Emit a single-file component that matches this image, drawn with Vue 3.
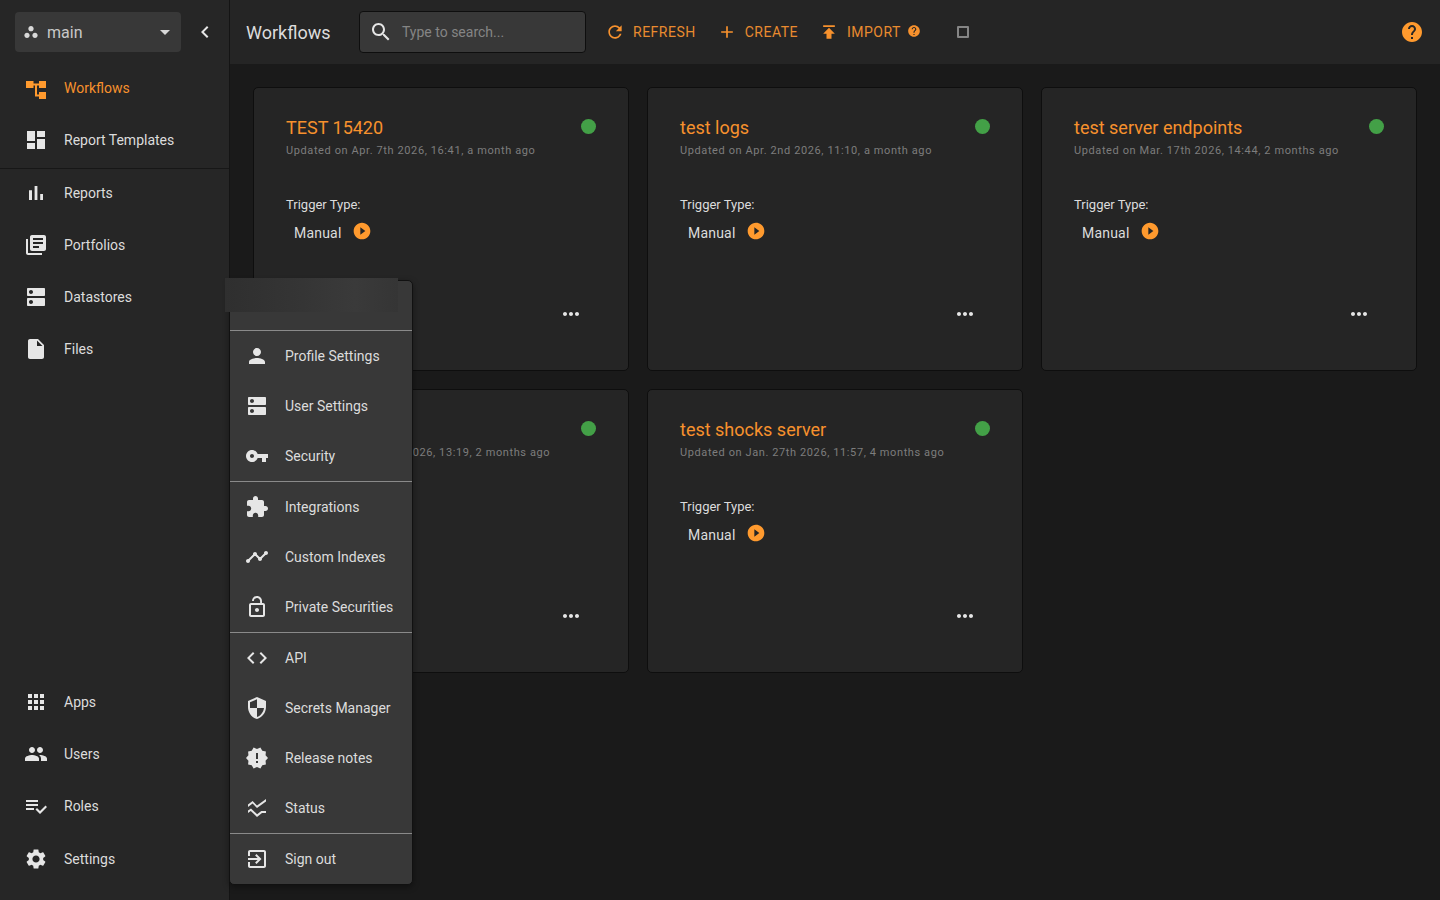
<script setup>
const P = {
  dash: 'M3 13h8V3H3v10zm0 8h8v-6H3v6zm10 0h8V11h-8v10zm0-18v6h8V3h-8z',
  bar: 'M5 9.2h3V19H5zM10.6 5h2.8v14h-2.8zm5.6 8H19v6h-2.8z',
  lib: 'M4 6H2v14c0 1.1.9 2 2 2h14v-2H4V6zm16-4H8c-1.1 0-2 .9-2 2v12c0 1.1.9 2 2 2h12c1.1 0 2-.9 2-2V4c0-1.1-.9-2-2-2zm-1 9H9V9h10v2zm-4 4H9v-2h6v2zm4-8H9V5h10v2z',
  dns: 'M20 13H4c-.55 0-1 .45-1 1v6c0 .55.45 1 1 1h16c.55 0 1-.45 1-1v-6c0-.55-.45-1-1-1zM7 19c-1.1 0-2-.9-2-2s.9-2 2-2 2 .9 2 2-.9 2-2 2zM20 3H4c-.55 0-1 .45-1 1v6c0 .55.45 1 1 1h16c.55 0 1-.45 1-1V4c0-.55-.45-1-1-1zM7 9c-1.1 0-2-.9-2-2s.9-2 2-2 2 .9 2 2-.9 2-2 2z',
  file: 'M6 2c-1.1 0-1.99.9-1.99 2L4 20c0 1.1.89 2 1.99 2H18c1.1 0 2-.9 2-2V8l-6-6H6zm7 7V3.5L18.5 9H13z',
  apps: 'M4 8h4V4H4v4zm6 12h4v-4h-4v4zm-6 0h4v-4H4v4zm0-6h4v-4H4v4zm6 0h4v-4h-4v4zm6-10v4h4V4h-4zm-6 4h4V4h-4v4zm6 6h4v-4h-4v4zm0 6h4v-4h-4v4z',
  people: 'M16 11c1.66 0 2.99-1.34 2.99-3S17.66 5 16 5c-1.66 0-3 1.34-3 3s1.34 3 3 3zm-8 0c1.66 0 2.99-1.34 2.99-3S9.66 5 8 5C6.34 5 5 6.34 5 8s1.34 3 3 3zm0 2c-2.33 0-7 1.17-7 3.5V19h14v-2.5c0-2.33-4.67-3.5-7-3.5zm8 0c-.29 0-.62.02-.97.05 1.16.84 1.97 1.97 1.97 3.45V19h6v-2.5c0-2.33-4.67-3.5-7-3.5z',
  roles: 'M14 10H2v2h12v-2zm0-4H2v2h12V6zM2 16h8v-2H2v2zm19.5-4.5L23 13l-6.99 7-4.51-4.5L13 14l3.01 3 5.49-5.5z',
  gear: 'M19.14 12.94c.04-.3.06-.61.06-.94 0-.32-.02-.64-.07-.94l2.03-1.58c.18-.14.23-.41.12-.61l-1.92-3.32c-.12-.22-.37-.29-.59-.22l-2.39.96c-.5-.38-1.03-.7-1.62-.94l-.36-2.54c-.04-.24-.24-.41-.48-.41h-3.84c-.24 0-.43.17-.47.41l-.36 2.54c-.59.24-1.13.57-1.62.94l-2.39-.96c-.22-.08-.47 0-.59.22L2.74 8.87c-.12.21-.08.47.12.61l2.03 1.58c-.05.3-.09.63-.09.94s.02.64.07.94l-2.03 1.58c-.18.14-.23.41-.12.61l1.92 3.32c.12.22.37.29.59.22l2.39-.96c.5.38 1.03.7 1.62.94l.36 2.54c.05.24.24.41.48.41h3.84c.24 0 .44-.17.47-.41l.36-2.54c.59-.24 1.13-.56 1.62-.94l2.39.96c.22.08.47 0 .59-.22l1.92-3.32c.12-.22.07-.47-.12-.61l-2.01-1.58zM12 15.6c-1.98 0-3.6-1.62-3.6-3.6s1.62-3.6 3.6-3.6 3.6 1.62 3.6 3.6-1.62 3.6-3.6 3.6z',
  person: 'M12 12c2.21 0 4-1.79 4-4s-1.79-4-4-4-4 1.79-4 4 1.79 4 4 4zm0 2c-2.67 0-8 1.34-8 4v2h16v-2c0-2.66-5.33-4-8-4z',
  key: 'M12.65 10C11.83 7.67 9.61 6 7 6c-3.31 0-6 2.69-6 6s2.69 6 6 6c2.61 0 4.83-1.67 5.65-4H17v4h4v-4h2v-4H12.65zM7 14c-1.1 0-2-.9-2-2s.9-2 2-2 2 .9 2 2-.9 2-2 2z',
  ext: 'M20.5 11H19V7c0-1.1-.9-2-2-2h-4V3.5C13 2.12 11.88 1 10.5 1S8 2.12 8 3.5V5H4c-1.1 0-1.99.9-1.99 2v3.8H3.5c1.49 0 2.7 1.21 2.7 2.7s-1.21 2.7-2.7 2.7H2V20c0 1.1.9 2 2 2h3.8v-1.5c0-1.49 1.21-2.7 2.7-2.7 1.49 0 2.7 1.21 2.7 2.7V22H17c1.1 0 2-.9 2-2v-4h1.5c1.38 0 2.5-1.12 2.5-2.5S21.88 11 20.5 11z',
  timeline: 'M23 8c0 1.1-.9 2-2 2-.18 0-.35-.02-.51-.07l-3.56 3.55c.05.16.07.34.07.52 0 1.1-.9 2-2 2s-2-.9-2-2c0-.18.02-.36.07-.52l-2.55-2.55c-.16.05-.34.07-.52.07s-.36-.02-.52-.07l-4.55 4.56c.05.16.07.33.07.51 0 1.1-.9 2-2 2s-2-.9-2-2 .9-2 2-2c.18 0 .35.02.51.07l4.56-4.55C8.02 9.36 8 9.18 8 9c0-1.1.9-2 2-2s2 .9 2 2c0 .18-.02.36-.07.52l2.55 2.55c.16-.05.34-.07.52-.07s.36.02.52.07l3.55-3.56C19.02 8.35 19 8.18 19 8c0-1.1.9-2 2-2s2 .9 2 2z',
  lock: 'M12 17c1.1 0 2-.9 2-2s-.9-2-2-2-2 .9-2 2 .9 2 2 2zm6-9h-1V6c0-2.76-2.24-5-5-5S7 3.24 7 6h1.9c0-1.71 1.39-3.1 3.1-3.1 1.71 0 3.1 1.39 3.1 3.1v2H6c-1.1 0-2 .9-2 2v10c0 1.1.9 2 2 2h12c1.1 0 2-.9 2-2V10c0-1.1-.9-2-2-2zm0 12H6V10h12v10z',
  code: 'M9.4 16.6L4.8 12l4.6-4.6L8 6l-6 6 6 6 1.4-1.4zm5.2 0l4.6-4.6-4.6-4.6L16 6l6 6-6 6-1.4-1.4z',
  shield: 'M12 1L3 5v6c0 5.55 3.84 10.74 9 12 5.16-1.26 9-6.45 9-12V5l-9-4zm0 10.99h7c-.53 4.12-3.28 7.79-7 8.94V12H5V6.3l7-3.11v8.8z',
  release: 'M23 12l-2.44-2.78.34-3.68-3.61-.82-1.89-3.18L12 3 8.6 1.54 6.71 4.72l-3.61.81.34 3.68L1 12l2.44 2.78-.34 3.69 3.61.82 1.89 3.18L12 21l3.4 1.46 1.89-3.18 3.61-.82-.34-3.68L23 12zm-10 5h-2v-2h2v2zm0-4h-2V7h2v6z',
  ssid: 'M21 5.47L12 12 7.62 7.62 3 11V8.52L7.62 5 12 9.4 21 2.99V5.47zM21 15h-4.7l-4.17 3.34L6 12.41l-3 2.13v2.45l2.8-2 6.2 6 5-4h4V15z',
  exit: 'M10.09 15.59L11.5 17l5-5-5-5-1.41 1.41L12.67 11H3v2h9.67l-2.58 2.59zM19 3H5c-1.11 0-2 .9-2 2v4h2V5h14v14H5v-4H3v4c0 1.1.89 2 2 2h14c1.1 0 2-.9 2-2V5c0-1.1-.9-2-2-2z',
  spaces: 'M6 13c-2.2 0-4 1.8-4 4s1.8 4 4 4 4-1.8 4-4-1.8-4-4-4zm6-10C9.8 3 8 4.8 8 7s1.8 4 4 4 4-1.8 4-4-1.8-4-4-4zm6 10c-2.2 0-4 1.8-4 4s1.8 4 4 4 4-1.8 4-4-1.8-4-4-4z',
  drop: 'M7 10l5 5 5-5z',
  chev: 'M15.41 7.41L14 6l-6 6 6 6 1.41-1.41L10.83 12z',
  search: 'M15.5 14h-.79l-.28-.27C15.41 12.59 16 11.11 16 9.5 16 5.91 13.09 3 9.5 3S3 5.91 3 9.5 5.91 16 9.5 16c1.61 0 3.09-.59 4.23-1.57l.27.28v.79l5 4.99L20.49 19l-4.99-5zm-6 0C7.01 14 5 11.99 5 9.5S7.01 5 9.5 5 14 7.01 14 9.5 11.99 14 9.5 14z',
  refresh: 'M17.65 6.35C16.2 4.9 14.21 4 12 4c-4.42 0-7.99 3.58-7.99 8s3.57 8 7.99 8c3.73 0 6.84-2.55 7.73-6h-2.08c-.82 2.33-3.04 4-5.65 4-3.31 0-6-2.69-6-6s2.69-6 6-6c1.66 0 3.14.69 4.22 1.78L13 11h7V4l-2.35 2.35z',
  add: 'M19 13h-6v6h-2v-6H5v-2h6V5h2v6h6v2z',
  publish: 'M5 4v2h14V4H5zm0 10h4v6h6v-6h4l-7-7-7 7z',
  help: 'M12 2C6.48 2 2 6.48 2 12s4.48 10 10 10 10-4.48 10-10S17.52 2 12 2zm1 17h-2v-2h2v2zm2.07-7.75l-.9.92C13.45 12.9 13 13.5 13 15h-2v-.5c0-1.1.45-2.1 1.17-2.83l1.24-1.26c.37-.36.59-.86.59-1.41 0-1.1-.9-2-2-2s-2 .9-2 2H8c0-2.21 1.79-4 4-4s4 1.79 4 4c0 .88-.36 1.68-.93 2.25z',
  play: 'M12 2C6.48 2 2 6.48 2 12s4.48 10 10 10 10-4.48 10-10S17.52 2 12 2zm-2 14.5v-9l6 4.5-6 4.5z',
  more: 'M6 10c-1.1 0-2 .9-2 2s.9 2 2 2 2-.9 2-2-.9-2-2-2zm12 0c-1.1 0-2 .9-2 2s.9 2 2 2 2-.9 2-2-.9-2-2-2zm-6 0c-1.1 0-2 .9-2 2s.9 2 2 2 2-.9 2-2-.9-2-2-2z',
  flow: 'M2 5h7.5v7H2zM15 5h7v7h-7zM15 16h7v7h-7zM9.5 7.5H15v2h-2V18.5h2v2h-4V9.5H9.5z'
}

const navTop = [
  { label: 'Workflows', icon: 'flow', active: true },
  { label: 'Report Templates', icon: 'dash' }
]
const navMid = [
  { label: 'Reports', icon: 'bar' },
  { label: 'Portfolios', icon: 'lib' },
  { label: 'Datastores', icon: 'dns' },
  { label: 'Files', icon: 'file' }
]
const navBottom = [
  { label: 'Apps', icon: 'apps' },
  { label: 'Users', icon: 'people' },
  { label: 'Roles', icon: 'roles' },
  { label: 'Settings', icon: 'gear' }
]
const actions = [
  { label: 'Refresh', icon: 'refresh' },
  { label: 'Create', icon: 'add' },
  { label: 'Import', icon: 'publish', help: true }
]
const cards = [
  { title: 'TEST 15420', updated: 'Updated on Apr. 7th 2026, 16:41, a month ago' },
  { title: 'test logs', updated: 'Updated on Apr. 2nd 2026, 11:10, a month ago' },
  { title: 'test server endpoints', updated: 'Updated on Mar. 17th 2026, 14:44, 2 months ago' },
  { title: 'test', updated: 'Updated on Feb. 24th 2026, 13:19, 2 months ago' },
  { title: 'test shocks server', updated: 'Updated on Jan. 27th 2026, 11:57, 4 months ago' }
]
const menuGroups = [
  [
    { label: 'Profile Settings', icon: 'person' },
    { label: 'User Settings', icon: 'dns' },
    { label: 'Security', icon: 'key' }
  ],
  [
    { label: 'Integrations', icon: 'ext' },
    { label: 'Custom Indexes', icon: 'timeline' },
    { label: 'Private Securities', icon: 'lock' }
  ],
  [
    { label: 'API', icon: 'code' },
    { label: 'Secrets Manager', icon: 'shield' },
    { label: 'Release notes', icon: 'release' },
    { label: 'Status', icon: 'ssid' }
  ],
  [{ label: 'Sign out', icon: 'exit' }]
]
</script>

<template>
  <div class="app">
    <aside class="sidebar">
      <div class="side-top">
        <div class="select">
          <svg class="spaces" viewBox="0 0 24 24"><path :d="P.spaces" /></svg>
          <span class="select-label">main</span>
          <svg class="drop" viewBox="0 0 24 24"><path :d="P.drop" /></svg>
        </div>
        <svg class="collapse" viewBox="0 0 24 24"><path :d="P.chev" /></svg>
      </div>
      <nav class="group group-top">
        <div v-for="n in navTop" :key="n.label" class="nav-item" :class="{ active: n.active }">
          <svg class="icon" viewBox="0 0 24 24"><path :d="P[n.icon]" /></svg>
          <span>{{ n.label }}</span>
        </div>
      </nav>
      <nav class="group group-mid">
        <div v-for="n in navMid" :key="n.label" class="nav-item">
          <svg class="icon" viewBox="0 0 24 24"><path :d="P[n.icon]" /></svg>
          <span>{{ n.label }}</span>
        </div>
      </nav>
      <nav class="group group-bottom">
        <div v-for="n in navBottom" :key="n.label" class="nav-item">
          <svg class="icon" viewBox="0 0 24 24"><path :d="P[n.icon]" /></svg>
          <span>{{ n.label }}</span>
        </div>
      </nav>
    </aside>

    <main class="main">
      <header class="topbar">
        <h1 class="page-title">Workflows</h1>
        <div class="search">
          <svg class="icon" viewBox="0 0 24 24"><path :d="P.search" /></svg>
          <span class="placeholder">Type to search...</span>
        </div>
        <div class="actions">
          <div v-for="a in actions" :key="a.label" class="action">
            <svg class="action-icon" viewBox="0 0 24 24"><path :d="P[a.icon]" /></svg>
            <span>{{ a.label }}</span>
            <svg v-if="a.help" class="mini-help" viewBox="0 0 24 24"><path :d="P.help" /></svg>
          </div>
        </div>
        <span class="checkbox"></span>
        <svg class="top-help" viewBox="0 0 24 24">
          <circle cx="12" cy="12" r="6.5" fill="#262626" />
          <path :d="P.help" />
        </svg>
      </header>

      <section class="grid">
        <article v-for="c in cards" :key="c.updated" class="card">
          <div class="card-head">
            <div>
              <h2 class="card-title">{{ c.title }}</h2>
              <p class="card-date">{{ c.updated }}</p>
            </div>
            <span class="dot"></span>
          </div>
          <p class="trigger-label">Trigger Type:</p>
          <div class="trigger">
            <span>Manual</span>
            <svg class="play" viewBox="0 0 24 24">
              <circle cx="12" cy="12" r="5" fill="#262626" />
              <path :d="P.play" />
            </svg>
          </div>
          <div class="card-foot">
            <svg class="icon" viewBox="0 0 24 24"><path :d="P.more" /></svg>
          </div>
        </article>
      </section>
    </main>

    <div class="menu">
      <div class="menu-account"></div>
      <div class="menu-blur"></div>
      <div v-for="(g, i) in menuGroups" :key="i" class="menu-group">
        <div v-for="m in g" :key="m.label" class="menu-item">
          <svg class="icon" viewBox="0 0 24 24"><path :d="P[m.icon]" /></svg>
          <span>{{ m.label }}</span>
        </div>
      </div>
    </div>
  </div>
</template>

<style>
html, body { margin: 0; background: #1a1a1a; }
</style>

<style scoped>
.app {
  position: relative;
  display: flex;
  width: 1440px;
  height: 900px;
  overflow: hidden;
  background: #1a1a1a;
  color: #e0e0e0;
  font-family: Roboto, "Liberation Sans", sans-serif;
  font-size: 14px;
}
.icon { width: 24px; height: 24px; fill: #e6e6e6; flex: none; }

.sidebar {
  width: 229px;
  flex: none;
  display: flex;
  flex-direction: column;
  background: #262626;
  border-right: 1px solid #141414;
}
.side-top {
  height: 62px;
  padding: 12px 0 0 15px;
  box-sizing: border-box;
  display: flex;
  align-items: flex-start;
}
.select {
  width: 166px;
  height: 40px;
  box-sizing: border-box;
  padding: 0 4px 0 8px;
  background: #383838;
  border-radius: 4px;
  display: flex;
  align-items: center;
  color: #c8c8c8;
  font-size: 16px;
}
.spaces { width: 16px; height: 16px; fill: #d8d8d8; flex: none; }
.select-label { margin-left: 8px; flex: 1; }
.drop { width: 24px; height: 24px; fill: #d8d8d8; flex: none; }
.collapse { width: 24px; height: 24px; fill: #e6e6e6; margin: 8px 0 0 12px; flex: none; }

.group-top { padding-bottom: 2px; border-bottom: 1px solid #171717; }
.group-mid { margin-top: -2px; }
.group-bottom { margin-top: auto; padding-bottom: 15px; }
.group-bottom .nav-item:last-child { margin-top: 1px; }
.nav-item {
  height: 52px;
  display: flex;
  align-items: center;
  gap: 16px;
  padding-left: 24px;
  color: #dcdcdc;
}
.nav-item.active { color: #f7912d; }
.nav-item.active .icon { fill: #ff9a2e; }

.main { flex: 1; min-width: 0; display: flex; flex-direction: column; }
.topbar {
  height: 64px;
  flex: none;
  box-sizing: border-box;
  padding: 0 16px;
  background: #252525;
  display: flex;
  align-items: center;
}
.page-title {
  margin: 0;
  width: 113px;
  flex: none;
  font-size: 18px;
  font-weight: 400;
  color: #dcdcdc;
}
.search {
  width: 227px;
  height: 42px;
  box-sizing: border-box;
  padding-left: 9px;
  background: #383838;
  border: 1px solid #0e0e0e;
  border-radius: 4px;
  display: flex;
  align-items: center;
  gap: 9px;
  flex: none;
}
.placeholder { color: #858585; }
.actions { display: flex; margin-left: 19px; gap: 21px; }
.action {
  display: flex;
  align-items: center;
  color: #e98b2f;
  text-transform: uppercase;
  letter-spacing: 0.5px;
}
.action-icon { width: 20px; height: 20px; fill: #f7912d; margin-right: 8px; }
.mini-help { width: 14px; height: 14px; fill: #f7912d; margin: -3px 0 0 6px; }
.checkbox {
  width: 12px;
  height: 12px;
  box-sizing: border-box;
  border: 2px solid #858585;
  border-radius: 1px;
  margin-left: 36px;
  flex: none;
}
.top-help { width: 24px; height: 24px; fill: #ff9a2e; margin-left: auto; margin-right: 0; flex: none; }

.grid {
  flex: 1;
  padding: 23px;
  display: grid;
  grid-template-columns: repeat(3, 376px);
  grid-auto-rows: 284px;
  gap: 18px;
  align-content: start;
}
.card {
  box-sizing: border-box;
  display: flex;
  flex-direction: column;
  padding: 29px 32px 44px;
  background: #252525;
  border: 1px solid #0e0e0e;
  border-radius: 5px;
}
.card-head { display: flex; justify-content: space-between; align-items: flex-start; }
.card-title { margin: 0; font-size: 18px; line-height: 22px; font-weight: 400; color: #f7912d; }
.card-date {
  margin: 4px 0 0;
  font-size: 11px;
  line-height: 16px;
  letter-spacing: 0.6px;
  color: #7d7d7d;
}
.dot { width: 15px; height: 15px; border-radius: 50%; background: #43a047; margin-top: 2px; }
.trigger-label { margin: 37px 0 0; font-size: 13px; line-height: 18px; color: #dcdcdc; }
.trigger {
  display: flex;
  align-items: center;
  gap: 10px;
  margin: 10px 0 0 8px;
  color: #dcdcdc;
  letter-spacing: 0.2px;
}
.play { width: 20px; height: 20px; fill: #ff9a2e; margin-top: -3px; }
.card-foot { margin-top: auto; display: flex; justify-content: flex-end; padding-right: 13px; }

.menu {
  position: absolute;
  left: 229px;
  top: 280px;
  width: 184px;
  box-sizing: border-box;
  background: #383838;
  border: 1px solid #111;
  border-left-width: 1px;
  border-radius: 0 5px 5px 5px;
  box-shadow: 0 2px 6px rgba(0, 0, 0, 0.4);
  color: #dcdcdc;
}
.menu-account { height: 49px; }
.menu-blur {
  position: absolute;
  left: -5px;
  top: -3px;
  width: 173px;
  height: 34px;
  background: linear-gradient(90deg, #2f2f2f, #353535 45%, #3a3a3a 75%, #353535);
}
.menu-group { border-top: 1px solid #8a8a8a; }
.menu-item {
  height: 50px;
  display: flex;
  align-items: center;
  gap: 16px;
  padding-left: 15px;
}
</style>
